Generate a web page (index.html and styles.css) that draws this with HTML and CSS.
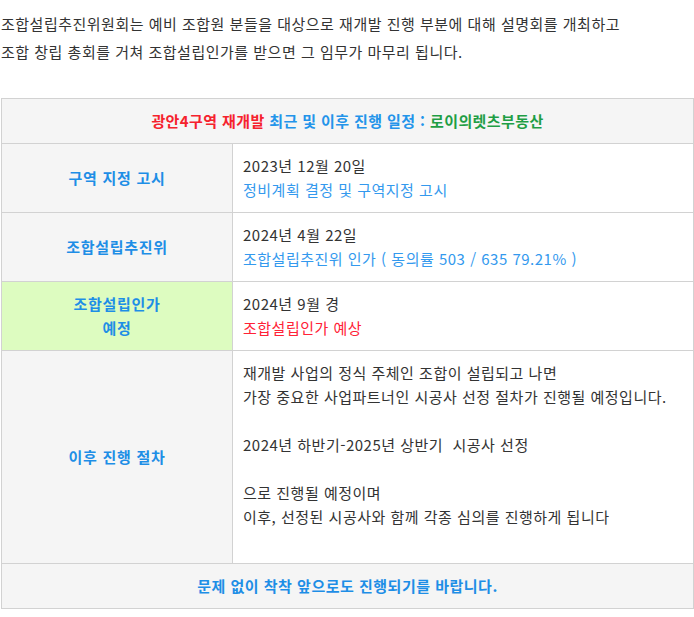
FILE: index.html
```html
<!DOCTYPE html>
<html lang="ko">
<head>
<meta charset="utf-8">
<link rel="stylesheet" href="styles.css">
</head>
<body>
<div class="intro">
  <p>조합설립추진위원회는 예비 조합원 분들을 대상으로 재개발 진행 부분에 대해 설명회를 개최하고</p>
  <p>조합 창립 총회를 거쳐 조합설립인가를 받으면 그 임무가 마무리 됩니다.</p>
</div>
<table class="schedule">
  <colgroup><col class="col-label"><col></colgroup>
  <tr>
    <th colspan="2" class="head"><span class="red">광안4구역 재개발</span> <span class="blue">최근 및 이후 진행 일정 :</span> <span class="green">로이의렛츠부동산</span></th>
  </tr>
  <tr>
    <td class="label">구역 지정 고시</td>
    <td class="body"><div class="date">2023년 12월 20일</div><div class="note">정비계획 결정 및 구역지정 고시</div></td>
  </tr>
  <tr>
    <td class="label">조합설립추진위</td>
    <td class="body"><div class="date">2024년 4월 22일</div><div class="note">조합설립추진위 인가 ( 동의률 503 / 635 79.21% )</div></td>
  </tr>
  <tr>
    <td class="label label-green">조합설립인가<br>예정</td>
    <td class="body"><div class="date">2024년 9월 경</div><div class="note note-red">조합설립인가 예상</div></td>
  </tr>
  <tr>
    <td class="label">이후 진행 절차</td>
    <td class="body body-long">
      <div class="line">재개발 사업의 정식 주체인 조합이 설립되고 나면</div>
      <div class="line">가장 중요한 사업파트너인 시공사 선정 절차가 진행될 예정입니다.</div>
      <div class="line">&nbsp;</div>
      <div class="line">2024년 하반기-2025년 상반기 &nbsp;시공사 선정</div>
      <div class="line">&nbsp;</div>
      <div class="line">으로 진행될 예정이며</div>
      <div class="line">이후, 선정된 시공사와 함께 각종 심의를 진행하게 됩니다</div>
      <div class="line">&nbsp;</div>
    </td>
  </tr>
  <tr>
    <td colspan="2" class="foot">문제 없이 착착 앞으로도 진행되기를 바랍니다.</td>
  </tr>
</table>
</body>
</html>
```

FILE: styles.css
```css
html, body {
  margin: 0;
  padding: 0;
  background: #ffffff;
}
body {
  font-family: "Noto Sans CJK KR", "Noto Sans", sans-serif;
  font-size: 15px;
  letter-spacing: 0.5px;
  color: #333333;
}
.intro {
  padding: 10px 0 0 1px;
}
.intro p {
  margin: 0;
  line-height: 28px;
}
.schedule {
  margin: 32px 0 0 1px;
  width: 693px;
  border-collapse: collapse;
  line-height: 24px;
}
.col-label {
  width: 231px;
}
.schedule th,
.schedule td {
  border: 1px solid #d2d2d2;
  padding: 10px;
  vertical-align: middle;
}
.head {
  background: #f5f5f5;
  font-weight: bold;
  text-align: center;
  letter-spacing: 0.4px;
}
.red { color: #f5222d; }
.blue { color: #2394ea; }
.green { color: #1f9e45; }
.label {
  background: #f5f5f5;
  color: #1e8ee6;
  font-weight: bold;
  text-align: center;
  letter-spacing: 0.7px;
}
.label-green {
  background: #ddfcc0;
}
.body {
  background: #ffffff;
  color: #333333;
  text-align: left;
}
.body-long {
  padding: 7px 10px 13px;
}
.note {
  color: #3399ee;
}
.note-red {
  color: #ff2236;
}
.foot {
  background: #f5f5f5;
  color: #1e8ee6;
  font-weight: bold;
  text-align: center;
  padding: 10px 10px 9px;
}
```
